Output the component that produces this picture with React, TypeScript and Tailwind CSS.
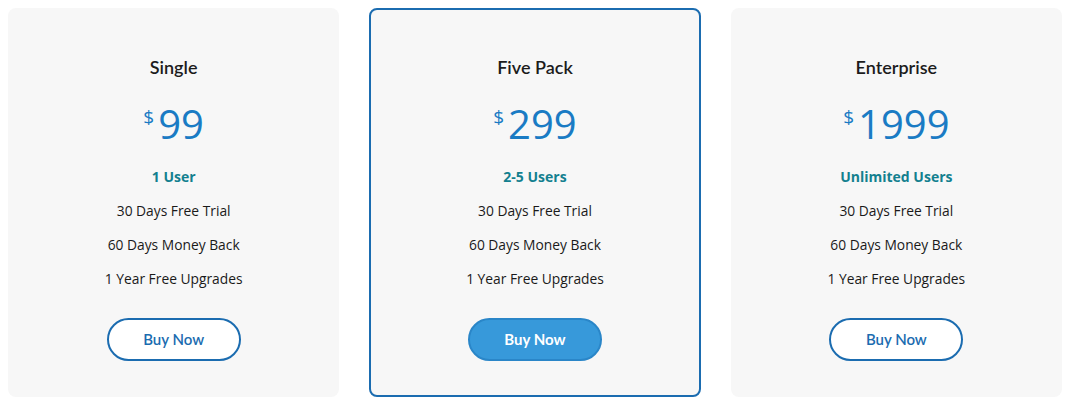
const plans = [
  { name: "Single", price: "99", users: "1 User", featured: false },
  { name: "Five Pack", price: "299", users: "2-5 Users", featured: true },
  { name: "Enterprise", price: "1999", users: "Unlimited Users", featured: false },
];

const features = ["30 Days Free Trial", "60 Days Money Back", "1 Year Free Upgrades"];

export default function App() {
  return (
    <main className="min-h-screen bg-white px-2 py-2 font-['Open_Sans',sans-serif]">
      <div className="grid grid-cols-3 gap-[30px]">
        {plans.map((plan) => (
          <div
            key={plan.name}
            className={
              plan.featured
                ? "flex h-[389px] flex-col items-center rounded-lg border-2 border-[#1b6cb0] bg-[#f7f7f7] pt-[45px]"
                : "flex h-[389px] flex-col items-center rounded-lg border-2 border-transparent bg-[#f7f7f7] pt-[45px]"
            }
          >
            <h3 className="font-['Lato',sans-serif] text-[18px] font-semibold leading-[24px] text-[#1c1c1c]">
              {plan.name}
            </h3>
            <div className="mt-[17px] flex h-[56px] items-start justify-center text-[#1a7bc4]">
              <span className="mt-[9px] mr-[4px] text-[19px] leading-[24px]">$</span>
              <span className="text-[40px] font-normal leading-[56px]">{plan.price}</span>
            </div>
            <p className="mt-[15px] text-[14px] font-bold leading-[20px] text-[#13808f]">{plan.users}</p>
            {features.map((f) => (
              <p key={f} className="mt-[14px] text-[13.8px] leading-[20px] text-[#1a1a1a]">
                {f}
              </p>
            ))}
            <button
              className={
                plan.featured
                  ? "mt-[29px] h-[43px] w-[134px] rounded-full border-2 border-[#2a86c8] bg-[#3799da] font-['Lato',sans-serif] text-[15px] font-bold text-white"
                  : "mt-[29px] h-[43px] w-[134px] rounded-full border-2 border-[#1b6cb0] bg-white font-['Lato',sans-serif] text-[15px] font-semibold text-[#1b6cb0]"
              }
            >
              Buy Now
            </button>
          </div>
        ))}
      </div>
    </main>
  );
}
